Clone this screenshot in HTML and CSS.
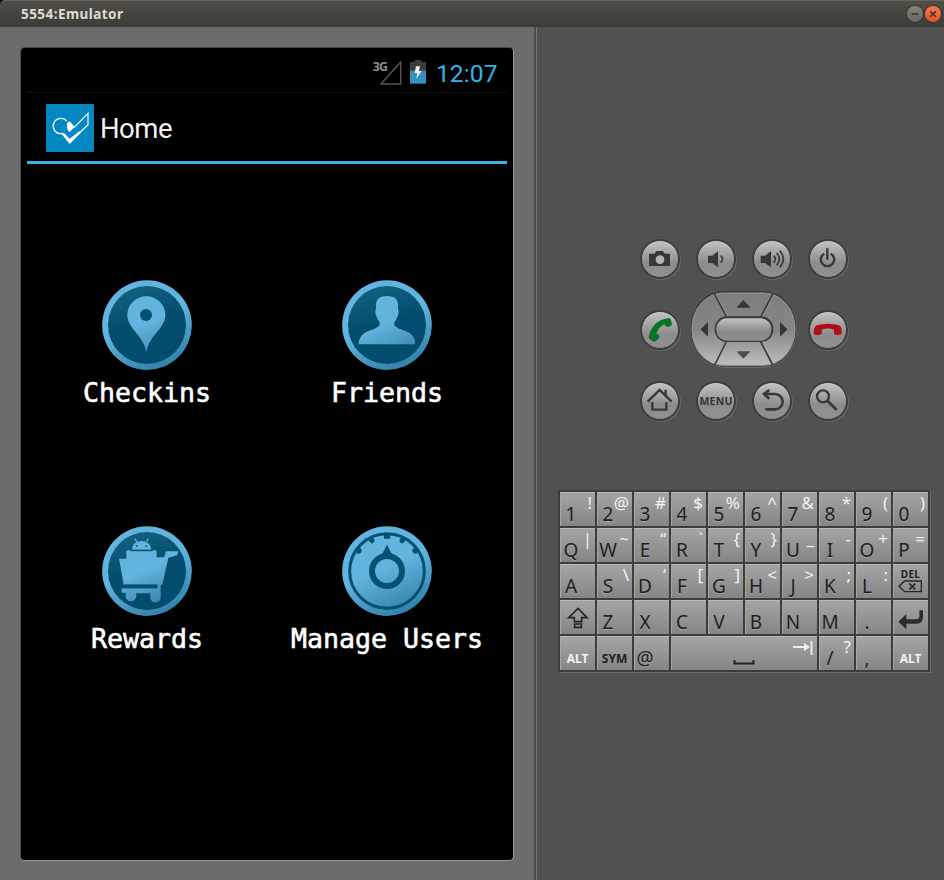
FILE: index.html
```html
<!DOCTYPE html>
<html lang="en">
<head>
<meta charset="utf-8">
<title>5554:Emulator</title>
<link rel="stylesheet" href="styles.css">
</head>
<body>
<header class="titlebar">
  <span class="title">5554:Emulator</span>
  <span class="wbtn"><svg viewBox="0 0 16 16"><path d="M4.5 8h7"/></svg></span>
  <span class="wbtn close"><svg viewBox="0 0 16 16"><path d="M5.2 5.2l5.6 5.6M10.8 5.2l-5.6 5.6"/></svg></span>
</header>
<svg class="defs" width="0" height="0">
  <defs>
    <linearGradient id="ring" x1="0.3" y1="0" x2="0.75" y2="1"><stop offset="0.45" stop-color="#62b3dd"/><stop offset="1" stop-color="#2d7ca3"/></linearGradient>
    <linearGradient id="disc" x1="0.3" y1="0" x2="0.6" y2="1"><stop offset="0" stop-color="#146080"/><stop offset="0.5" stop-color="#024d6e"/></linearGradient>
    <linearGradient id="fig" gradientUnits="userSpaceOnUse" x1="160" y1="60" x2="260" y2="280"><stop offset="0.45" stop-color="#62b3dd"/><stop offset="1" stop-color="#2d7ca3"/></linearGradient>
    <linearGradient id="pad" x1="0" y1="0" x2="0" y2="1"><stop offset="0" stop-color="#7e7e7e"/><stop offset="0.5" stop-color="#868686"/><stop offset="1" stop-color="#bdbdbd"/></linearGradient>
    <linearGradient id="pill" x1="0" y1="0" x2="0" y2="1"><stop offset="0" stop-color="#c2c2c2"/><stop offset="0.6" stop-color="#898989"/><stop offset="1" stop-color="#8d8d8d"/></linearGradient>
  </defs>
</svg>
<main class="window">
  <section class="left">
    <div class="screen">
      <div class="status">
        <span class="net">3G</span>
        <svg class="signal" width="22" height="26" viewBox="89 180 66 78">
          <path d="M92 252L151 186V252Z" fill="none" stroke="#585858" stroke-width="4"/>
        </svg>
        <svg class="battery" width="16" height="24" viewBox="180 181 48 72">
          <path d="M180 187h14v-6h20v6h14v27h-48z" fill="#3d3d3d"/>
          <path d="M180 213h48v39h-48z" fill="#3292bd"/>
          <path d="M198 200h12l-3 14h8l-16 24 3-18h-8z" fill="#f0f0f0"/>
        </svg>
        <span class="clock">12:07</span>
      </div>
      <div class="actionbar">
        <svg width="48" height="48" viewBox="138 312 144 144">
          <path d="M138 312h144v144H138z" fill="#0488c2"/>
          <path d="M200 363A23 23 0 1 0 180 401L190 402M222 383L264 340V374L241 396" fill="none" stroke="#fff" stroke-width="3.5"/>
          <path d="M202 368L209 364 224 381 208 397Q197 382 202 368ZM182 398L192 399 209 416 238 394 244 397 209 432Z" fill="#fff"/>
        </svg>
        <span>Home</span>
      </div>
      <div class="apps">
        <div class="app">
          <svg width="92" height="92" viewBox="64 27 276 276">
            <circle cx="202" cy="165.500" r="134.500" fill="url(#ring)"/><circle cx="202" cy="165" r="117" fill="url(#disc)"/>
            <path d="M200 252C197 198 143 178 143 134A57 55 0 0 1 257 134C257 178 203 198 200 252Z" fill="url(#fig)"/>
            <circle cx="199" cy="135" r="18" fill="#04506f"/>
          </svg>
          <span>Checkins</span>
        </div>
        <div class="app">
          <svg width="92" height="92" viewBox="64 27 276 276">
            <circle cx="202" cy="165.500" r="134.500" fill="url(#ring)"/><circle cx="202" cy="165" r="117" fill="url(#disc)"/>
            <path d="M170 96Q174 78 202 78T234 96Q236 104 235 116Q240 130 232 142Q230 152 224 156V166Q232 176 255 182Q287 192 287 223H117Q117 192 149 182Q172 176 180 166V156Q174 152 172 142Q164 130 169 116Q168 104 170 96Z" fill="url(#fig)"/>
          </svg>
          <span>Friends</span>
        </div>
        <div class="app">
          <svg width="92" height="92" viewBox="64 27 276 276">
            <circle cx="202" cy="165.500" r="134.500" fill="url(#ring)"/><circle cx="202" cy="165" r="117" fill="url(#disc)"/>
            <path d="M156 101Q158 77 185 75Q213 77 215 101ZM118 128H140V106Q147 98 154 106H217Q224 98 231 106V124H253L259 106H296L292 118L266 125 248 206H243V240A15 15 0 0 1 212 247V232H170V240A16 16 0 0 1 138 240V230H126V217H233V206H132Z" fill="url(#fig)"/>
            <path d="M172 80L166 68M199 80L206 68" stroke="#5aa9d0" stroke-width="4"/>
            <path d="M154 103H217" stroke="#04506f" stroke-width="3"/><path d="M134 211H233" stroke="#04506f" stroke-width="11"/>
            <circle cx="172" cy="90" r="3" fill="#146080"/><circle cx="200" cy="90" r="3" fill="#146080"/>
          </svg>
          <span>Rewards</span>
        </div>
        <div class="app">
          <svg width="92" height="92" viewBox="64 27 276 276">
            <circle cx="202" cy="165.500" r="134.500" fill="url(#ring)"/>
            <circle cx="202" cy="165" r="112" fill="none" stroke="#045273" stroke-width="9"/>
            <g fill="#045273"><path d="M193 54h18v14h-18zM143 68l16-8 6 15q-7 12-14 4zM261 68l-16-8-6 15q7 12 14 4zM107 101l10-12 10 14q-2 12-14 10zM297 101l-10-12-10 14q2 12 14 10z"/>
            <path d="M183 123L202 86 221 123z"/></g>
            <circle cx="202" cy="165" r="45" fill="none" stroke="#045273" stroke-width="18"/>
          </svg>
          <span>Manage Users</span>
        </div>
      </div>
    </div>
  </section>
  <section class="right">
    <div class="pad">
      <div class="btn"><svg viewBox="33 29 114 114"><path d="M57 70H74L79 62H99L104 70H120V107H57Z"/><circle cx="90" cy="88" r="13" fill="#b4b4b4"/></svg></div>
      <div class="btn"><svg viewBox="201 29 114 114"><path d="M234 76H247L264 62V111L247 98H234Z"/><path class="ln" d="M272 76Q284 86 272 97"/></svg></div>
      <div class="btn"><svg viewBox="369 29 114 114"><path d="M392 76H405L423 62V111L405 98H392Z"/><path class="ln" d="M431 76Q441 86 431 97M440 68Q456 86 440 105M449 61Q471 86 449 111"/></svg></div>
      <div class="btn"><svg viewBox="537 29 114 114"><path class="ln mid" d="M583 70A20 20 0 1 0 602 70M592 54V88"/></svg></div>
      <div class="btn"><svg viewBox="33 242 114 114"><path d="M56 322C61 291 82 267 115 264Q121 262 123 268L126 283Q116 293 107 288L103 282Q86 291 79 309L88 316Q88 326 73 334Q65 333 56 322Z" fill="#0a7325"/></svg></div>
      <svg class="dpad" width="112" height="80" viewBox="174 179 336 240">
        <rect x="182" y="183" width="318" height="229" rx="100" ry="112" fill="#6f6f6f"/>
        <rect x="182" y="182" width="317" height="227" rx="98" ry="110" fill="#393939"/>
        <rect x="186" y="188" width="309" height="217" rx="94" ry="106" fill="url(#pad)" stroke="#999" stroke-width="3"/>
        <path d="M253 190L291 262M429 190L391 262M290 332L254 404M391 332L428 404" stroke="#3b3b3b" stroke-width="5"/>
        <path d="M258 192L295 260M433 194L397 260" stroke="#a0a0a0" stroke-width="2"/>
        <rect x="254" y="258" width="176" height="77" rx="37" fill="#3b3b3b"/>
        <rect x="259" y="264" width="165" height="67" rx="32" fill="url(#pill)"/>
        <path d="M340 209L362 232H319ZM212 297L234 275V319ZM472 297L450 275V319Z" fill="#363636"/>
        <path d="M340 385L362 363H319Z" fill="#4c4c4c"/>
      </svg>
      <div class="btn"><svg viewBox="537 242 114 114"><path d="M552 312Q549 289 562 285Q593 275 626 285Q638 289 634 312Q623 317 612 311V298Q593 291 575 298V311Q564 317 552 312Z" fill="#b30c12"/></svg></div>
      <div class="btn"><svg viewBox="33 455 114 114"><path class="ln mid" d="M53 514L89 479L125 514M107 493V478M67 515V538H109V515"/></svg></div>
      <div class="btn menu"><span>MENU</span></div>
      <div class="btn"><svg viewBox="369 455 114 114"><path class="ln thick" d="M418 479L402 491L418 505M403 491H435A22 22 0 0 1 435 537H406"/></svg></div>
      <div class="btn"><svg viewBox="537 455 114 114"><circle cx="579" cy="498" r="18" class="ln mid"/><path class="ln thick" d="M593 512L620 539"/></svg></div>
    </div>
    <div class="keys">
      <div class="key"><b>1</b><i>!</i></div><div class="key"><b>2</b><i>@</i></div><div class="key"><b>3</b><i>#</i></div><div class="key"><b>4</b><i>$</i></div><div class="key"><b>5</b><i>%</i></div><div class="key"><b>6</b><i>^</i></div><div class="key"><b>7</b><i>&amp;</i></div><div class="key"><b>8</b><i>*</i></div><div class="key"><b>9</b><i>(</i></div><div class="key"><b>0</b><i>)</i></div>
      <div class="key"><b>Q</b><i>|</i></div><div class="key"><b>W</b><i>~</i></div><div class="key"><b>E</b><i>“</i></div><div class="key"><b>R</b><i>`</i></div><div class="key"><b>T</b><i>{</i></div><div class="key"><b>Y</b><i>}</i></div><div class="key"><b>U</b><i>_</i></div><div class="key"><b>I</b><i>-</i></div><div class="key"><b>O</b><i>+</i></div><div class="key"><b>P</b><i>=</i></div>
      <div class="key"><b>A</b></div><div class="key"><b>S</b><i>\</i></div><div class="key"><b>D</b><i>‘</i></div><div class="key"><b>F</b><i>[</i></div><div class="key"><b>G</b><i>]</i></div><div class="key"><b>H</b><i>&lt;</i></div><div class="key"><b>J</b><i>&gt;</i></div><div class="key"><b>K</b><i>;</i></div><div class="key"><b>L</b><i>:</i></div>
      <div class="key del"><span>DEL</span><svg width="26" height="13" viewBox="462 300 78 39"><path d="M465 319L482 303H532V335H482Z" fill="none" stroke="#262626" stroke-width="4"/><path d="M496 311L514 328M514 311L496 328" stroke="#262626" stroke-width="5"/></svg></div>
      <div class="key"><svg width="35" height="34" viewBox="30 360 105 102"><path d="M84 385L111 413H95V425H73V413H56ZM74 432H94V442H74Z" fill="none" stroke="#262626" stroke-width="5"/></svg></div><div class="key"><b>Z</b></div><div class="key"><b>X</b></div><div class="key"><b>C</b></div><div class="key"><b>V</b></div><div class="key"><b>B</b></div><div class="key"><b>N</b></div><div class="key"><b>M</b></div><div class="key"><b>.</b></div>
      <div class="key"><svg width="35" height="34" viewBox="447 360 105 102"><path d="M463 425L487 402V418H517Q526 418 526 408V391H537V412Q537 431 518 431H487V448Z" fill="#2c2c2c"/></svg></div>
      <div class="key word alt">ALT</div><div class="key word">SYM</div><div class="key"><b>@</b></div>
      <div class="key space"><svg width="146" height="34" viewBox="0 0 146 34"><path d="M63.500 24V27.500H82.500V24" fill="none" stroke="#222" stroke-width="2"/><path d="M122 11H136M140.500 5V19" stroke="#eee" stroke-width="1.800"/><path d="M133 7L139 11 133 15z" fill="#eee"/></svg></div>
      <div class="key"><b>/</b><i>?</i></div><div class="key"><b>,</b></div><div class="key word alt">ALT</div>
    </div>
  </section>
</main>
</body>
</html>
```
FILE: styles.css
```css
* { box-sizing: border-box; }
body { margin: 0; width: 944px; height: 880px; overflow: hidden; background: #000; font-family: "Noto Sans", sans-serif; display: flex; flex-direction: column; }
.defs { position: absolute; }
svg { display: block; }
.titlebar { height: 27px; flex: none; display: flex; align-items: center; gap: 2px; padding: 0 3px 0 21px; background: linear-gradient(#4f4e47, #3c3b37); border-top: 1px solid #66645a; border-radius: 5px 0 0 0; }
.title { flex: 1; font: bold 13.5px/26px "Noto Sans", sans-serif; letter-spacing: .45px; color: #dfdbd2; }
.wbtn { width: 16px; height: 16px; border-radius: 50%; background: linear-gradient(#85847a, #66655f); box-shadow: 0 0 0 1px #33322e; }
.wbtn.close { background: linear-gradient(#f47a50, #e4501f); }
.wbtn svg { fill: none; stroke: #32312d; stroke-width: 1.4; }

.window { flex: 1; display: flex; }
.left { width: 534px; padding: 21px 0 0 21px; background: #6c6c6c; }
.right { flex: 1; border-left: 2px solid #4d4d4d; box-shadow: inset 1px 0 #777; background: #515151; display: flex; flex-direction: column; padding: 196px 0 0 22px; }

.screen { width: 492px; height: 812px; padding: 0 6px; background: #000; border-radius: 4px; box-shadow: 0 -1px #484848, -1px 0 #4f4f4f, 1px 0 #999, 0 1px #999; }
.status { height: 45px; border-bottom: 1px solid #101010; display: flex; align-items: flex-start; padding: 12px 9px 0 0; justify-content: flex-end; }
.net { font: bold 12.5px/14px "Noto Sans", sans-serif; letter-spacing: -1px; color: #8d8d8d; margin-right: -7px; }
.signal { margin-right: 2px; }
.battery { margin-left: 6px; }
.clock { margin-left: 10px; width: 62px; font: 400 24.5px/27px Roboto, sans-serif; letter-spacing: .1px; color: #33b5e5; white-space: nowrap; }
.actionbar { height: 71px; border-bottom: 3px solid #33b5e5; display: flex; padding: 11px 0 0 19px; }
.actionbar span { margin-left: 6px; font: 27.5px/50px Roboto, sans-serif; letter-spacing: -.5px; color: #f3f3f3; }
.apps { display: grid; grid-template: 246px 246px / 240px 240px; padding-top: 115px; }
.app { display: flex; flex-direction: column; align-items: center; }
.app span { font: 26.6px/32px "DejaVu Sans Mono", monospace; color: #fff; -webkit-text-stroke: .6px #fff; margin-top: 6px; white-space: nowrap; }

.pad { display: grid; grid-template: repeat(3, 71px) / repeat(4, 56px); place-items: center; margin-left: 74px; width: 224px; }
.dpad { grid-column: span 2; }
.btn { width: 38px; height: 38px; border-radius: 50%; border: 1px solid #3b3b3b; background: linear-gradient(#c4c4c4, #8c8c8c 62%, #929292) border-box; box-shadow: inset 0 1px #d0d0d0, 0 0 0 1px #3b3b3b, 1px 1px 0 1px #696969; fill: #383838; }
.btn svg { width: 38px; height: 38px; margin: -1px; }
.btn .ln { fill: none; stroke: #383838; stroke-width: 5; }
.btn .mid { stroke-width: 7; }
.btn .thick { stroke-width: 8; }
.menu { font: bold 10.5px/37px "Noto Sans", sans-serif; color: #333; letter-spacing: .2px; display: flex; justify-content: center; }

.keys { margin-top: 54px; width: 372px; display: grid; grid-template-columns: repeat(10, 35px); grid-auto-rows: 34px; gap: 2px; padding: 2px; background: #3d3d3d; box-shadow: 1px 1px #6c6c6c; }
.key { display: grid; grid-template: 34px / 100%; background: linear-gradient(#a5a5a5, #858585); box-shadow: inset 0 1px #b9b9b9, inset 1px 0 #a5a5a5; color: #202020; }
.key b, .key i { grid-area: 1 / 1; font-weight: 400; font-style: normal; line-height: 20px; height: 20px; }
.key b { width: 22px; margin-top: 12px; font-size: 19px; display: flex; justify-content: center; text-shadow: 0 1px #a3a3a3; }
.key i { justify-self: end; margin: 1px 3px 0 0; font-size: 17px; color: #f2f2f2; }
.space { grid-column: span 4; }
.word { font: bold 12px/46px "Noto Sans", sans-serif; text-align: center; }
.alt { color: #f2f2f2; }
.del { display: flex; flex-direction: column; align-items: center; padding-top: 5px; }
.del span { font: bold 10px/11px "Noto Sans", sans-serif; letter-spacing: .3px; }
```
